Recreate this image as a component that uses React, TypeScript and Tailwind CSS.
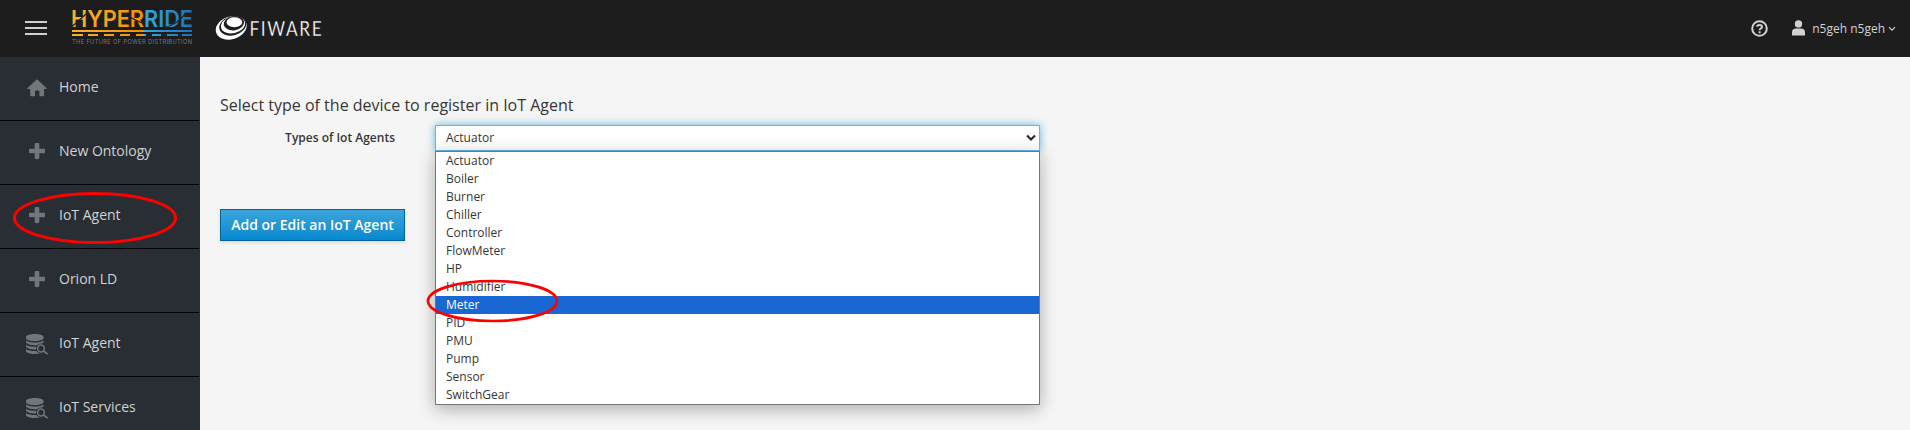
const UI = "font-['Open_Sans',sans-serif]";

function HomeIcon() {
  return (
    <svg className="relative -top-px" width="20" height="18" viewBox="0 0 20 18" fill="#72767b">
      <path d="M10 0.2 L19.8 9.2 Q20 10 19 10 H17 V16.2 Q17 17.2 16 17.2 H12.4 V12.4 Q12.4 11.4 11.4 11.4 H9 Q8 11.4 8 12.4 V17.2 H4.2 Q3.2 17.2 3.2 16.2 V10 H1 Q0 10 0.2 9.2 Z" />
    </svg>
  );
}

function PlusIcon() {
  return (
    <svg className="relative -top-0.5" width="20" height="18" viewBox="0 0 20 18" fill="#72767b">
      <path d="M8.700 1h2.600q1 0 1 1v4.700h4.700q1 0 1 1v2.600q0 1-1 1h-4.700v4.700q0 1-1 1H8.700q-1 0-1-1v-4.700H3q-1 0-1-1V7.700q0-1 1-1h4.700V2q0-1 1-1z" />
    </svg>
  );
}

function DatabaseSearchIcon() {
  return (
    <svg className="relative -top-px -left-px" width="22" height="22" viewBox="0 0 22 22">
      <g fill="#72767b">
        <path d="M0 4.200C0 2.200 4 1 8.800 1S17.600 2.200 17.600 4.200V5.100C17.600 7 13.700 8.200 8.800 8.200S0 7 0 5.100z" />
        <path d="M0 7.400Q3 9.500 8.800 9.500T17.600 7.400V9.400Q14.600 12.300 8.800 12.300T0 9.800z" />
        <path d="M0 11.700Q3 13.700 8.800 13.700T17.600 11.700V13.600Q14.600 16.500 8.800 16.500T0 14z" />
        <path d="M0 15.900Q3 17.900 8.800 17.900T17.600 15.900V18Q14.600 21 8.800 21T0 18.400z" />
      </g>
      <circle cx="15" cy="15.500" r="5" fill="#292e34" />
      <path d="M17.500 18l4 3.300" stroke="#292e34" strokeWidth="4" />
      <circle cx="15" cy="15.500" r="3.400" fill="none" stroke="#72767b" strokeWidth="1.500" />
      <path d="M17.500 18l3.500 2.700" stroke="#72767b" strokeWidth="1.700" strokeLinecap="round" />
    </svg>
  );
}

function HyperrideLogo() {
  return (
    <svg className="overflow-visible" width="124" height="38" viewBox="0 0 124 38">
      <defs>
        <linearGradient id="hr" gradientUnits="userSpaceOnUse" x1="1" x2="121" y1="0" y2="0">
          <stop offset="0" stopColor="#fbb033" />
          <stop offset="0.600" stopColor="#f39200" />
          <stop offset="0.600" stopColor="#36a9e1" />
          <stop offset="1" stopColor="#1d71b8" />
        </linearGradient>
      </defs>
      <text x="0" y="19" fontSize="23" textLength="122" lengthAdjust="spacingAndGlyphs" fontFamily="Inter, sans-serif" fontWeight="600" fill="url(#hr)">HYPERRIDE</text>
      <path d="M0 19.500L15 6M52 6L71 15M92 20Q106 17 114 6" fill="none" stroke="#1d1d1d" strokeWidth="1.200" />
      <rect x="1" y="22" width="120" height="2" fill="url(#hr)" />
      <path d="M1 26h11v2H1zM17 26h10v2H17zM33 26h10v2H33zM49 26h10v2H49zM65 26h10v2H65zM81 26h9v2H81zM96 26h11v2H96zM111 26h10v2H111z" fill="url(#hr)" />
      <text x="1" y="36.200" fontSize="5.700" textLength="120" lengthAdjust="spacing" fontFamily="Inter, sans-serif" fill="#77797b">THE FUTURE OF POWER DISTRIBUTION</text>
    </svg>
  );
}

function FiwareLogo() {
  return (
    <svg className="overflow-visible" width="108" height="28" viewBox="0 0 108 28">
      <ellipse cx="16.200" cy="13.900" rx="15.800" ry="11.300" fill="#fff" transform="rotate(-17 16.200 13.900)" />
      <ellipse cx="17.700" cy="11.700" rx="13.700" ry="9.600" fill="#1d1d1d" transform="rotate(-15 17.700 11.700)" />
      <ellipse cx="18" cy="10.900" rx="12.200" ry="8.300" fill="#fff" transform="rotate(-13 18 10.900)" />
      <ellipse cx="18.900" cy="9.200" rx="10.300" ry="7.100" fill="#1d1d1d" transform="rotate(-9 18.900 9.200)" />
      <ellipse cx="19.400" cy="8.200" rx="7.800" ry="5" fill="#fff" />
      <g transform="translate(34.500 21.500) scale(.82 1)">
        <text fontSize="21" textLength="88" lengthAdjust="spacing" fontFamily="Lato, sans-serif" fill="#fff" stroke="#1d1d1d" strokeWidth="0.300">FIWARE</text>
      </g>
    </svg>
  );
}

const menu = [
  { label: "Home", icon: HomeIcon },
  { label: "New Ontology", icon: PlusIcon },
  { label: "IoT Agent", icon: PlusIcon, marked: true },
  { label: "Orion LD", icon: PlusIcon },
  { label: "IoT Agent", icon: DatabaseSearchIcon },
  { label: "IoT Services", icon: DatabaseSearchIcon },
];

const types = ["Actuator", "Boiler", "Burner", "Chiller", "Controller", "FlowMeter", "HP", "Humidifier", "Meter", "PID", "PMU", "Pump", "Sensor", "SwitchGear"];

export default function App() {
  return (
    <div className={`flex h-[430px] w-full flex-col overflow-hidden bg-[#f5f5f5] text-xs text-[#363636] ${UI}`}>
      <header className="flex h-[57px] shrink-0 items-start bg-[#1d1d1d] text-[#d1d1d1]">
        <button className="mt-[21px] ml-[25px] flex w-[22px] flex-col gap-1">
          <span className="h-0.5 w-full bg-[#d1d1d1]" />
          <span className="h-0.5 w-full bg-[#d1d1d1]" />
          <span className="h-0.5 w-full bg-[#d1d1d1]" />
        </button>
        <div className="mt-2 ml-6"><HyperrideLogo /></div>
        <div className="mt-3.5 ml-5"><FiwareLogo /></div>
        <div className="mt-5 mr-3.5 ml-auto flex h-[18px] items-center">
          <svg className="relative -top-px" width="17" height="17" viewBox="0 0 17 17" fill="none">
            <circle cx="8.500" cy="8.500" r="7.300" stroke="#d1d1d1" strokeWidth="2" />
            <path d="M6 6.700C6.200 4.500 11 4.200 11 6.900C11 8.500 8.600 8.500 8.600 10.200" stroke="#d1d1d1" strokeWidth="2" />
            <path d="M7.600 11.300h2v2h-2z" fill="#d1d1d1" />
          </svg>
          <svg className="relative -top-px ml-6" width="13" height="16" viewBox="0 0 13 16" fill="#d1d1d1">
            <circle cx="6.500" cy="3.900" r="3.700" />
            <path d="M0 15.500V12.500Q0 8.500 4 8.500H9Q13 8.500 13 12.500V15.500z" />
          </svg>
          <span className="ml-[7px]">n5geh n5geh</span>
          <svg className="ml-[3px]" width="8" height="6" viewBox="0 0 8 6" fill="none" stroke="#d1d1d1" strokeWidth="1.200"><path d="M1 1.200L4 4.200L7 1.200" /></svg>
        </div>
      </header>
      <div className="flex min-h-0 flex-1">
        <nav className="w-[200px] shrink-0 overflow-hidden border-r border-[#292e34] bg-[#292e34]">
          {menu.map(({ label, icon: Icon, marked }, i) => (
            <div key={i} className="relative flex h-16 items-center border-b border-[#030303] text-sm text-[#d1d1d1]">
              <span className="ml-[27px] flex w-8 items-center"><Icon /></span>
              <span className="-mt-1">{label}</span>
              {marked && (
                <svg className="absolute top-1.5 left-[13px]" width="164" height="54" fill="none">
                  <ellipse cx="82" cy="27" rx="80.500" ry="24.500" stroke="#f00" strokeWidth="3" />
                </svg>
              )}
            </div>
          ))}
        </nav>
        <main className="flex-1 px-5 pt-[37px]">
          <h1 className="text-base leading-[22px]">Select type of the device to register in IoT Agent</h1>
          <div className="mt-[9px] flex h-[84px] items-start">
            <label className="w-[175px] pt-1 text-right font-semibold leading-[18px]">Types of Iot Agents</label>
            <div className="relative ml-10 w-[605px]">
              <div className="flex h-[26px] items-center justify-between border border-[#66b8e3] bg-white pr-[3px] pl-2.5 shadow-[0_0_8px_rgba(0,136,206,0.6)]">
                <span>Actuator</span>
                <svg width="10" height="8" viewBox="0 0 10 8" fill="none" stroke="#2b2b2b" strokeWidth="2.200"><path d="M1 1.500L5 5.500L9 1.500" /></svg>
              </div>
              <div className="absolute top-[26px] left-0 w-[605px] border border-[#767676] bg-white shadow-[0_4px_16px_rgba(0,0,0,0.3)]">
                {types.map((t) => (
                  <div key={t} className={t === "Meter" ? "h-[18px] bg-[#1967d2] pl-2.5 leading-[18px] text-white" : "h-[18px] pl-2.5 leading-[18px]"}>{t}</div>
                ))}
                <svg className="absolute top-[127px] -left-2.5" width="132" height="44" fill="none">
                  <ellipse cx="66.500" cy="22" rx="64.500" ry="20" stroke="#f00" strokeWidth="2.700" />
                </svg>
              </div>
            </div>
          </div>
          <button className="flex h-8 w-[185px] items-center justify-center border border-[#00659c] bg-gradient-to-b from-[#39a5dc] to-[#0088ce] text-sm font-semibold text-white shadow-[0_2px_3px_rgba(3,3,3,0.1)]">Add or Edit an IoT Agent</button>
        </main>
      </div>
    </div>
  );
}
